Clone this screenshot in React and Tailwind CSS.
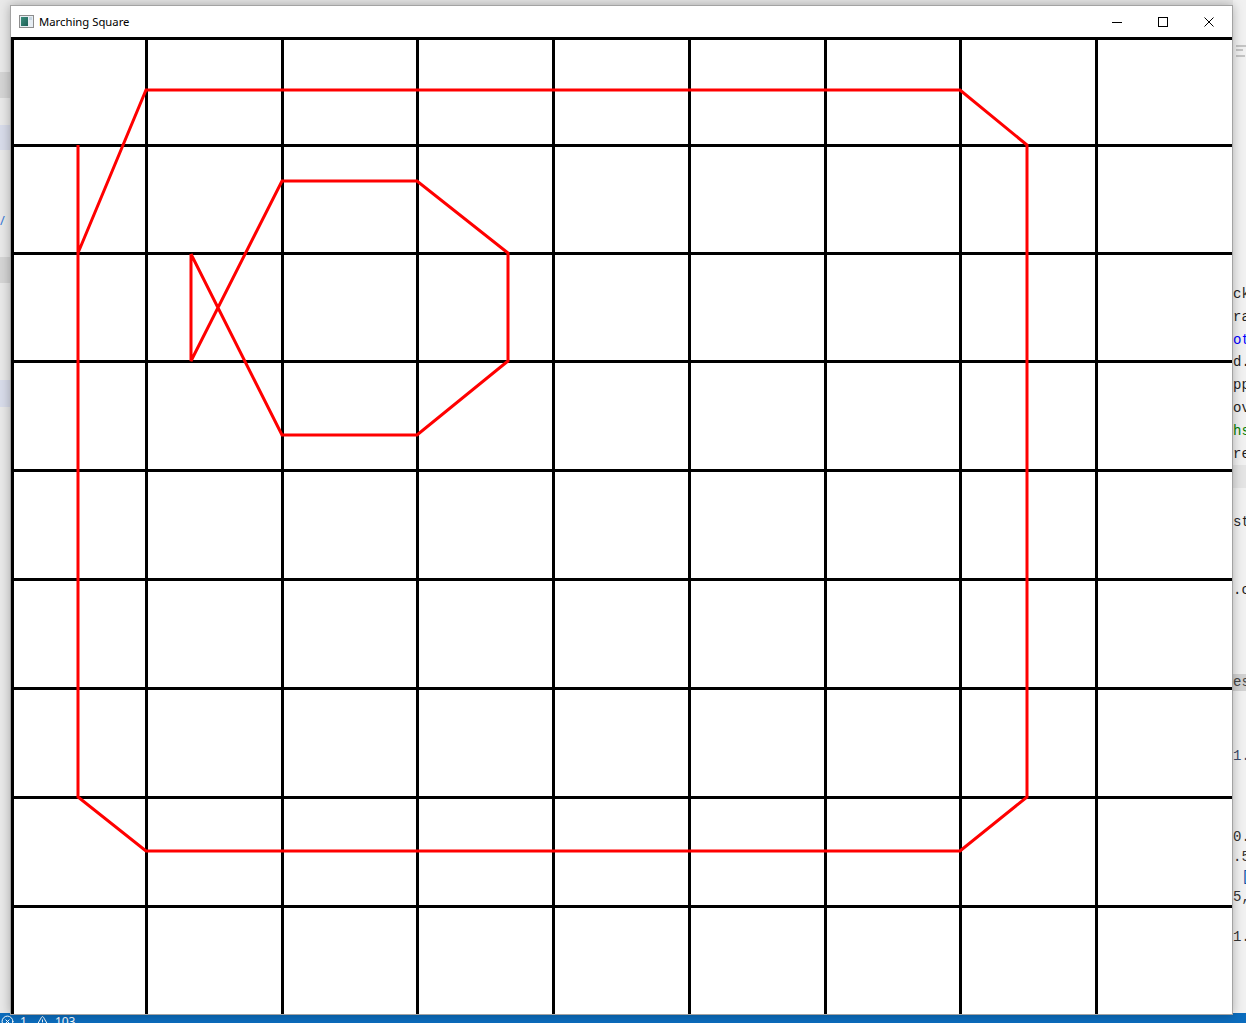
import React from 'react';
import { CircleX, TriangleAlert } from 'lucide-react';

// grid line centres, in page pixels
const COLS = [12, 146, 282, 417, 553, 689, 825, 960, 1096];
const ROWS = [38, 145, 253, 361, 470, 579, 688, 797, 906];

const OUTER = '78,145 78,797 146,851 960,851 1027,797 1027,145 960,90 146,90 78,253';
const INNER = '191,254 191,361 282,181 417,181 508,253 508,361 417,435 282,435 191,254';

const EDITOR_LINES = [
    { t: 'ck', c: 'text-[#1f1f1f]' },
    { t: 'ra', c: 'text-[#1f1f1f]' },
    { t: 'ot', c: 'text-[#0000ff]' },
    { t: 'd.', c: 'text-[#1f1f1f]' },
    { t: 'pp', c: 'text-[#1f1f1f]' },
    { t: 'ov', c: 'text-[#1f1f1f]' },
    { t: 'hs', c: 'text-[#008000]' },
    { t: 're', c: 'text-[#1f1f1f]' },
    { t: '', c: '' },
    { t: '', c: '' },
    { t: 'st', c: 'text-[#1f1f1f]' },
    { t: '', c: '' },
    { t: '', c: '' },
    { t: '.c', c: 'text-[#1f1f1f]' },
];

const PANEL_LINES = [
    { t: '1.', c: 'text-[#3a4a6a]' },
    { t: '', c: '' },
    { t: '', c: '' },
    { t: '', c: '' },
    { t: '0.', c: 'text-[#333]' },
    { t: '.5', c: 'text-[#333]' },
    { t: ' [', c: 'text-[#0451a5]' },
    { t: '5,', c: 'text-[#333]' },
    { t: '', c: '' },
    { t: '1.', c: 'text-[#333]' },
];

const AppIcon = () => (
    <svg width="15" height="13" viewBox="0 0 15 13" className="shrink-0">
        <defs>
            <linearGradient id="ico" x1="0" y1="0" x2="1" y2="1">
                <stop offset="0" stopColor="#3b8f7d" />
                <stop offset="1" stopColor="#1e5f57" />
            </linearGradient>
        </defs>
        <rect x="0.5" y="0.5" width="14" height="12" fill="#e7eef4" stroke="#8d8d8d" />
        <rect x="2" y="2" width="7" height="9" fill="url(#ico)" />
        <rect x="10" y="2" width="3" height="3" fill="#c7d6e3" />
    </svg>
);

const CaptionButton = ({ children }) => (
    <div className="flex h-full w-[46px] items-center justify-center">{children}</div>
);

const Canvas = () => (
    <svg width="1221" height="977" viewBox="11 37 1221 977" className="block">
        <rect x="11" y="37" width="1221" height="977" fill="#ffffff" />
        <g fill="#000000" shapeRendering="crispEdges">
            {COLS.map((x) => (
                <rect key={'c' + x} x={x - 1} y="37" width="3" height="977" />
            ))}
            {ROWS.map((y) => (
                <rect key={'r' + y} x="11" y={y - 1} width="1221" height="3" />
            ))}
        </g>
        <g fill="none" stroke="#ff0000" strokeWidth="3" strokeLinejoin="miter">
            <polyline points={OUTER} />
            <polyline points={INNER} />
        </g>
    </svg>
);

const AppWindow = () => (
    <div className="absolute left-[10px] top-[5px] flex w-[1223px] flex-col border border-[#a3a3a3] bg-white shadow-[0_0_10px_rgba(0,0,0,0.28)]">
        <div className="flex h-[31px] items-center">
            <div className="ml-[8px]">
                <AppIcon />
            </div>
            <span className="ml-[5px] text-[11.3px] leading-none text-[#000]">Marching Square</span>
            <div className="ml-auto flex h-full">
                <CaptionButton>
                    <svg width="10" height="10" viewBox="0 0 10 10" shapeRendering="crispEdges">
                        <rect x="0" y="5" width="10" height="1" fill="#000" />
                    </svg>
                </CaptionButton>
                <CaptionButton>
                    <svg width="10" height="10" viewBox="0 0 10 10" shapeRendering="crispEdges">
                        <rect x="0.5" y="0.5" width="9" height="9" fill="none" stroke="#000" />
                    </svg>
                </CaptionButton>
                <CaptionButton>
                    <svg width="10" height="10" viewBox="0 0 10 10">
                        <path d="M0.5 0.5 L9.5 9.5 M9.5 0.5 L0.5 9.5" stroke="#000" strokeWidth="1" />
                    </svg>
                </CaptionButton>
            </div>
        </div>
        <Canvas />
    </div>
);

const LeftStrip = () => (
    <div className="flex w-[10px] shrink-0 flex-col bg-[#e9e9e9]">
        <div className="mt-[72px] h-[26px] bg-[#d5d5d5]" />
        <div className="mt-[27px] h-[25px] bg-[#d8dcea]" />
        <div className="mt-[62px] h-[16px] text-[13px] leading-[16px] text-[#3b7ad6]">/</div>
        <div className="mt-[29px] h-[26px] bg-[#d5d5d5]" />
        <div className="mt-[97px] h-[27px] bg-[#d8dcea]" />
    </div>
);

const RightStrip = () => (
    <div className="flex w-[13px] shrink-0 flex-col overflow-hidden whitespace-pre bg-[#f1f1f1] font-['Liberation_Mono',monospace] text-[14px]">
        <div className="ml-[3px] mt-[45px] flex flex-col gap-[2px]">
            <div className="h-[2px] w-[10px] bg-[#c4c4c4]" />
            <div className="h-[2px] w-[7px] bg-[#c4c4c4]" />
            <div className="mt-[2px] h-[2px] w-[9px] bg-[#c4c4c4]" />
        </div>
        <div className="mt-[226px] flex flex-col">
            {EDITOR_LINES.map((l, i) => (
                <div key={i} className={`h-[22.8px] leading-[22.8px] ${l.c} ${i === 8 ? 'bg-[#e4e4e4]' : ''}`}>
                    {l.t}
                </div>
            ))}
        </div>
        <div className="mt-[72px] h-[17px] bg-[#d2d2d2] leading-[17px] text-[#444]">es</div>
        <div className="mt-[55px] flex flex-col">
            {PANEL_LINES.map((l, i) => (
                <div key={i} className={`h-[20.1px] leading-[20.1px] ${l.c}`}>
                    {l.t}
                </div>
            ))}
        </div>
    </div>
);

const StatusBar = () => (
    <div className="flex h-[22px] items-start gap-[6px] bg-[#0b6cbd] pl-[1px] pt-[2px] text-[12px] leading-[14px] text-white">
        <CircleX size={13} strokeWidth={1.8} />
        <span>1</span>
        <TriangleAlert size={13} strokeWidth={1.8} className="ml-[3px]" />
        <span>103</span>
    </div>
);

export default function App() {
    return (
        <div className="relative h-[1023px] w-[1246px] overflow-hidden bg-[#e6e6e6] font-['Noto_Sans',sans-serif]">
            <div className="flex h-[1013px]">
                <LeftStrip />
                <div className="flex-1 bg-[#e6e6e6]" />
                <RightStrip />
            </div>
            <StatusBar />
            <AppWindow />
        </div>
    );
}
